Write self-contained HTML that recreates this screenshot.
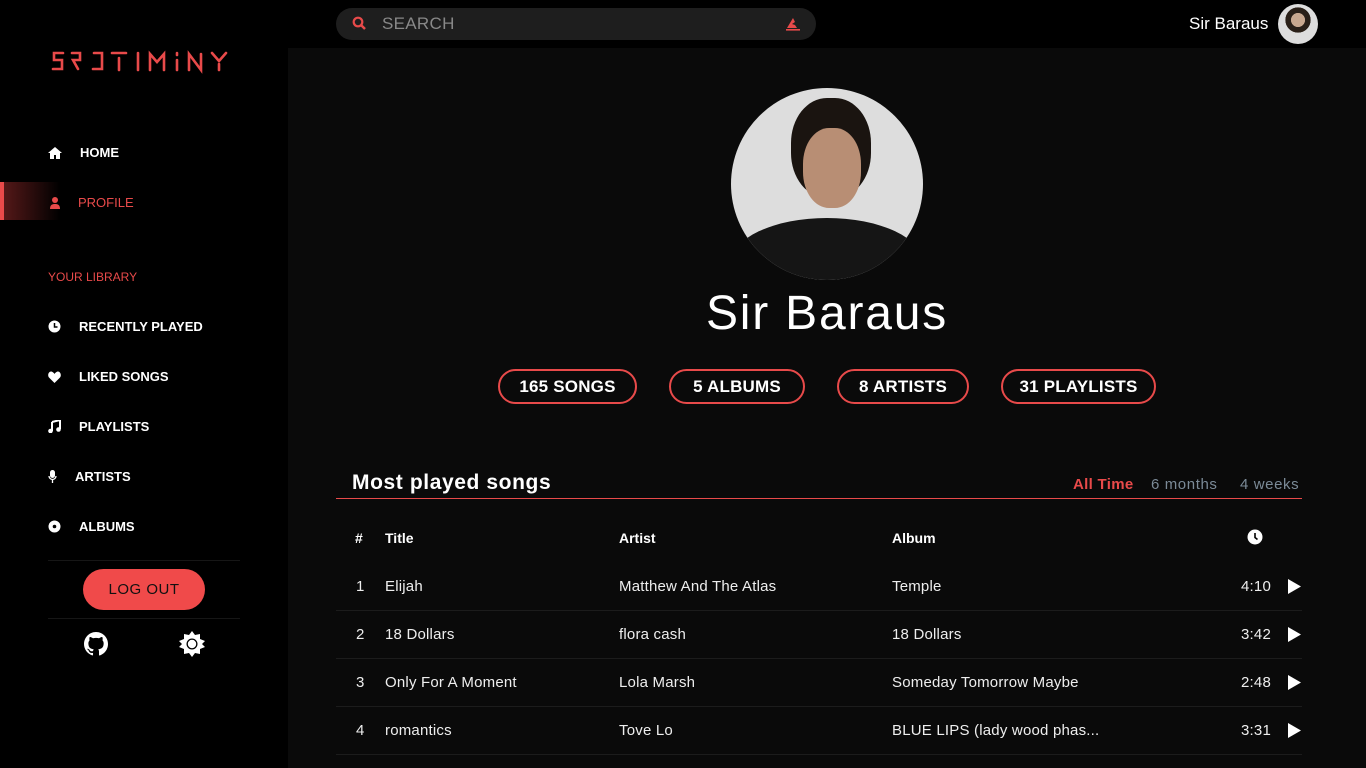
<!DOCTYPE html>
<html><head><meta charset="utf-8"><style>
*{margin:0;padding:0;box-sizing:border-box}
body{width:1366px;height:768px;background:#000;font-family:"Liberation Sans",sans-serif;color:#fff;position:relative;overflow:hidden}
.abs{position:absolute}
.side a{position:absolute;left:48px;font-size:13px;font-weight:bold;color:#fff;display:flex;align-items:center}
.side a svg{margin-right:18px}
.main{left:288px;top:48px;width:1078px;height:720px;background:#0a0a0a}
.pill{position:absolute;top:369px;height:35px;border:2px solid #e84a4a;border-radius:18px;font-weight:bold;font-size:17px;display:flex;align-items:center;justify-content:center;letter-spacing:0.2px}
.row{position:absolute;left:336px;width:966px;height:48px;border-bottom:1px solid #1c1c1c;font-size:15px;color:#eee;letter-spacing:0.2px}
.row span{position:absolute;top:15px}
</style></head><body>
<div class="abs" style="left:50px;top:50px">
<svg width="190" height="24" viewBox="0 0 190 24" style="display:block" fill="none" stroke="#e84a4a" stroke-width="2.6" stroke-linecap="round">
<path d="M13 3H4v7h8v9H3"/><path d="M22 3h8v7h-7l5 9"/><path d="M44 3h8v16h-9"/><path d="M62 3h14M69 8v12"/><path d="M88 3v17"/><path d="M100 20V4l7 8 7-8v16"/><path d="M127 3v2M127 10v10"/><path d="M139 20V4l12 16V4"/><path d="M162 3l7 8 7-8M169 14v6"/>
</svg></div>
<div class="side">
<div class="abs" style="left:0;top:182px;width:60px;height:38px;background:linear-gradient(90deg,#5a1a1a,#000)"></div>
<div class="abs" style="left:0;top:182px;width:4px;height:38px;background:#e84a4a"></div>
<a style="top:145px"><svg width="14" height="12" viewBox="0 0 14 12"><path d="M7 0L0 6h2v6h4V8h2v4h4V6h2z" fill="#fff"/></svg>HOME</a>
<a style="top:195px;color:#e84a4a;font-weight:normal;left:50px"><svg width="10" height="12" viewBox="0 0 10 12"><circle cx="5" cy="3" r="3" fill="#e84a4a"/><path d="M0 12c0-4 2-5 5-5s5 1 5 5z" fill="#e84a4a"/></svg>PROFILE</a>
<div class="abs" style="left:48px;top:270px;font-size:12px;color:#e84a4a">YOUR LIBRARY</div>
<a style="top:319px"><svg width="13" height="13"><circle cx="6.5" cy="6.5" r="6" fill="#fff"/><path d="M6.5 3v4h3" stroke="#000" stroke-width="1.5" fill="none"/></svg>RECENTLY PLAYED</a>
<a style="top:369px"><svg width="13" height="12" viewBox="0 0 13 12"><path d="M6.5 12L1 6.5C-1 4 1 0 3.5 0.5 5 1 6 2 6.5 3 7 2 8 1 9.5.5 12 0 14 4 12 6.5z" fill="#fff"/></svg>LIKED SONGS</a>
<a style="top:419px"><svg width="13" height="13" viewBox="0 0 13 13"><path d="M4 2l8-2v9" stroke="#fff" stroke-width="2" fill="none"/><path d="M4 2v9" stroke="#fff" stroke-width="2"/><circle cx="2.5" cy="11" r="2.3" fill="#fff"/><circle cx="10.5" cy="9.5" r="2.3" fill="#fff"/></svg>PLAYLISTS</a>
<a style="top:469px"><svg width="9" height="13" viewBox="0 0 9 13"><rect x="2" y="0" width="5" height="8" rx="2.5" fill="#fff"/><path d="M1 6a3.5 3.5 0 007 0M4.5 10v3" stroke="#fff" stroke-width="1.3" fill="none"/></svg>ARTISTS</a>
<a style="top:519px"><svg width="13" height="13"><circle cx="6.5" cy="6.5" r="6" fill="#fff"/><circle cx="6.5" cy="6.5" r="1.8" fill="#000"/></svg>ALBUMS</a>
</div>
<div class="abs" style="left:48px;top:560px;width:192px;height:1px;background:#161616"></div>
<div class="abs" style="left:83px;top:569px;width:122px;height:41px;border-radius:21px;background:#f04a4a;color:#111;font-size:15px;display:flex;align-items:center;justify-content:center;letter-spacing:0.5px">LOG OUT</div>
<div class="abs" style="left:48px;top:618px;width:192px;height:1px;background:#161616"></div>
<svg class="abs" style="left:84px;top:632px" width="24" height="24" viewBox="0 0 16 16"><path fill="#fff" d="M8 0C3.58 0 0 3.58 0 8c0 3.54 2.290 6.53 5.47 7.59.4.07.55-.17.55-.38v-1.33c-2.23.48-2.7-1.07-2.7-1.07-.36-.92-.89-1.17-.89-1.17-.73-.5.05-.49.05-.49.8.06 1.23.83 1.23.83.72 1.22 1.87.87 2.33.66.07-.52.28-.87.51-1.07-1.78-.2-3.64-.89-3.64-3.95 0-.87.31-1.59.82-2.15-.08-.2-.36-1.02.08-2.12 0 0 .67-.21 2.2.82a7.6 7.6 0 014 0c1.53-1.04 2.2-.82 2.2-.82.44 1.1.16 1.92.08 2.12.51.56.82 1.27.82 2.15 0 3.07-1.87 3.75-3.65 3.95.29.25.54.73.54 1.48v2.2c0 .21.15.46.55.38A8 8 0 0016 8c0-4.42-3.58-8-8-8z"/></svg>
<svg class="abs" style="left:179px;top:631px" width="26" height="26" viewBox="0 0 26 26"><path fill="#fff" d="M13 0l3 4 5-1 0 5 5 2-3 3 3 3-5 2 0 5-5-1-3 4-3-4-5 1 0-5-5-2 3-3-3-3 5-2 0-5 5 1z"/><circle cx="13" cy="13" r="5.5" fill="#000"/><circle cx="13" cy="13" r="4.2" fill="#fff"/></svg>
<div class="abs" style="left:336px;top:8px;width:480px;height:32px;border-radius:16px;background:#1e1e1e"></div>
<svg class="abs" style="left:352px;top:16px" width="14" height="15"><circle cx="6" cy="6" r="4.3" stroke="#e84a4a" stroke-width="2.2" fill="none"/><path d="M9 9l4 4" stroke="#e84a4a" stroke-width="2.5"/></svg>
<div class="abs" style="left:382px;top:14px;font-size:17px;color:#888;letter-spacing:0.3px">SEARCH</div>
<svg class="abs" style="left:785px;top:16px" width="16" height="16"><path d="M2 12L8 2l2 4-3 2 3 1 2 3z" fill="#e84a4a"/><rect x="1" y="13" width="14" height="1.6" fill="#e84a4a"/></svg>
<div class="abs" style="left:1189px;top:14px;font-size:17px">Sir Baraus</div>
<div class="abs" style="left:1278px;top:4px;width:40px;height:40px;border-radius:50%;background:radial-gradient(circle at 50% 40%,#c9a88f 0 22%,#2a2018 23% 40%,#ddd 41%)"></div>
<div class="abs main"></div>
<div class="abs" style="left:731px;top:88px;width:192px;height:192px;border-radius:50%;overflow:hidden;background:#ddd">
<div class="abs" style="left:60px;top:10px;width:80px;height:100px;border-radius:45%;background:#1a1410"></div>
<div class="abs" style="left:72px;top:40px;width:58px;height:80px;border-radius:45%;background:#b88e74"></div>
<div class="abs" style="left:0;top:130px;width:192px;height:90px;border-radius:50% 50% 0 0;background:#151515"></div>
</div>
<div class="abs" style="left:0;width:1654px;top:286px;text-align:center;font-size:48px;letter-spacing:1.8px">Sir Baraus</div>
<div class="pill" style="left:498px;width:139px">165 SONGS</div>
<div class="pill" style="left:669px;width:136px">5 ALBUMS</div>
<div class="pill" style="left:837px;width:132px">8 ARTISTS</div>
<div class="pill" style="left:1001px;width:155px">31 PLAYLISTS</div>
<div class="abs" style="left:352px;top:471px;font-size:21px;font-weight:bold;letter-spacing:0.6px">Most played songs</div>
<div class="abs" style="left:1073px;top:476px;font-size:15px;color:#e84a4a;font-weight:bold;letter-spacing:0.3px">All Time</div>
<div class="abs" style="left:1151px;top:476px;font-size:15px;color:#7b8a97;letter-spacing:0.6px">6 months</div>
<div class="abs" style="left:1240px;top:476px;font-size:15px;color:#7b8a97;letter-spacing:0.6px">4 weeks</div>
<div class="abs" style="left:336px;top:498px;width:966px;height:1px;background:#e84a4a"></div>
<div class="abs" style="top:530px;left:355px;font-size:14px;font-weight:bold">#</div>
<div class="abs" style="top:530px;left:385px;font-size:14px;font-weight:bold">Title</div>
<div class="abs" style="top:530px;left:619px;font-size:14px;font-weight:bold">Artist</div>
<div class="abs" style="top:530px;left:892px;font-size:14px;font-weight:bold">Album</div>
<svg class="abs" style="left:1247px;top:529px" width="16" height="16"><circle cx="8" cy="8" r="7.5" fill="#fff"/><path d="M8 4v4.5l2.5 2" stroke="#000" stroke-width="1.6" fill="none"/></svg>
<div class="row" style="top:563px"><span style="left:20px">1</span><span style="left:49px">Elijah</span><span style="left:283px">Matthew And The Atlas</span><span style="left:556px">Temple</span><span style="left:905px">4:10</span><svg style="position:absolute;left:952px;top:16px" width="13" height="15"><path d="M0 0l13 7.5L0 15z" fill="#fff"/></svg></div>
<div class="row" style="top:611px"><span style="left:20px">2</span><span style="left:49px">18 Dollars</span><span style="left:283px">flora cash</span><span style="left:556px">18 Dollars</span><span style="left:905px">3:42</span><svg style="position:absolute;left:952px;top:16px" width="13" height="15"><path d="M0 0l13 7.5L0 15z" fill="#fff"/></svg></div>
<div class="row" style="top:659px"><span style="left:20px">3</span><span style="left:49px">Only For A Moment</span><span style="left:283px">Lola Marsh</span><span style="left:556px">Someday Tomorrow Maybe</span><span style="left:905px">2:48</span><svg style="position:absolute;left:952px;top:16px" width="13" height="15"><path d="M0 0l13 7.5L0 15z" fill="#fff"/></svg></div>
<div class="row" style="top:707px"><span style="left:20px">4</span><span style="left:49px">romantics</span><span style="left:283px">Tove Lo</span><span style="left:556px">BLUE LIPS (lady wood phas...</span><span style="left:905px">3:31</span><svg style="position:absolute;left:952px;top:16px" width="13" height="15"><path d="M0 0l13 7.5L0 15z" fill="#fff"/></svg></div>
</body></html>
